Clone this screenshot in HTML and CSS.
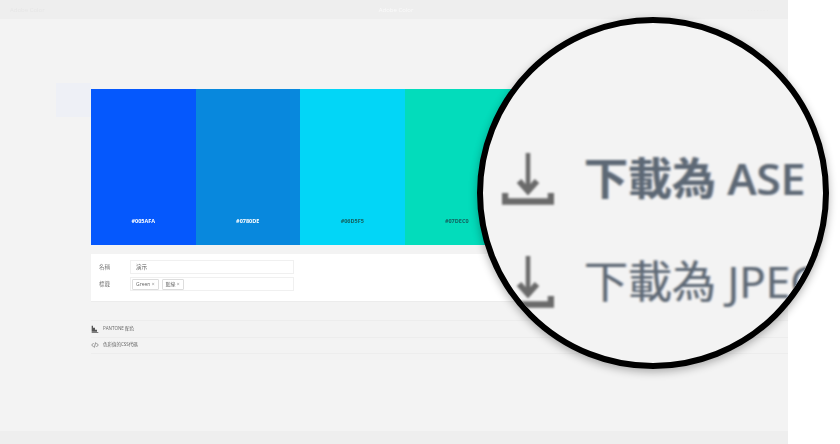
FILE: index.html
```html
<!DOCTYPE html>
<html lang="zh-Hant">
<head>
<meta charset="utf-8">
<title>演示</title>
<link rel="stylesheet" href="styles.css">
</head>
<body>
<div class="app">
  <header class="topbar"><span class="brand">Adobe Color</span><span class="title">Adobe Color</span><span class="tools">· · · · · · ·</span></header>
  <main class="content">
    <div class="stage">
      <div class="ghost"></div>
      <div class="column">
        <div class="swatches">
          <div class="swatch s1"><span>#005AFA</span></div>
          <div class="swatch s2"><span>#0780DE</span></div>
          <div class="swatch s3 dark"><span>#06D5F5</span></div>
          <div class="swatch s4 dark"><span>#07DEC0</span></div>
          <div class="swatch s5"></div>
        </div>
        <section class="form">
          <div class="row"><label>名稱</label><div class="field"><span class="value">演示</span></div></div>
          <div class="row"><label>標籤</label><div class="field"><span class="tag">Green <i>×</i></span><span class="tag">藍綠 <i>×</i></span></div></div>
        </section>
        <div class="links">
          <div class="link">
            <svg class="ico" viewBox="0 0 12 12"><path d="M1 1h2v9H1zM3 4h3v6H3zM3 7h6v3H3zM1 10.500h10v1H1z" fill="#555"/></svg>
            <span>PANTONE 配色</span>
          </div>
          <div class="link">
            <svg class="ico" viewBox="0 0 12 12"><path d="M4 3 1 6l3 3M8 3l3 3-3 3M7 2 5 10" fill="none" stroke="#666"/></svg>
            <span>色彩值的CSS代碼</span>
          </div>
        </div>
      </div>
    </div>
  </main>
  <footer class="bottombar"></footer>
</div>
<div class="lens">
  <div class="lens-inner">
    <div class="lens-row">
      <svg class="dl" viewBox="0 0 52 52"><path d="M26 0v36" fill="none" stroke="#6a6a6a" stroke-width="4.500"/><path d="M17 28l9 10 9-10" fill="none" stroke="#6a6a6a" stroke-width="6"/><path d="M3 40v8.500h46v-8.500" fill="none" stroke="#6a6a6a" stroke-width="6.500"/></svg>
      <span>下載為 ASE</span>
    </div>
    <div class="lens-row light">
      <svg class="dl" viewBox="0 0 52 52"><path d="M26 0v36" fill="none" stroke="#6a6a6a" stroke-width="4.500"/><path d="M17 28l9 10 9-10" fill="none" stroke="#6a6a6a" stroke-width="6"/><path d="M3 40v8.500h46v-8.500" fill="none" stroke="#6a6a6a" stroke-width="6.500"/></svg>
      <span>下載為 JPEG</span>
    </div>
  </div>
</div>
</body>
</html>
```
FILE: styles.css
```css
html, body { margin: 0; height: 100%; background: #fff; overflow: hidden; }
body { width: 840px; height: 444px; font-family: "Open Sans", "Noto Sans CJK TC", sans-serif; }
.app { width: 788px; height: 444px; background: #f3f3f3; display: flex; flex-direction: column; }
.topbar { height: 19px; background: #eeeeee; display: flex; align-items: center; justify-content: space-between; padding: 0 20px 0 10px; font-size: 6px; color: #e6e6e6; box-sizing: border-box; filter: blur(.6px); }
.title { color: #fafafa; }
.content { flex: 1; min-height: 0; }
.stage { position: relative; padding: 70px 0 0 91px; filter: blur(.45px); }
.ghost { position: absolute; left: 56px; top: 64px; width: 35px; height: 34px; background: #eef0f6; }
.column { width: 697px; }
.swatches { display: flex; height: 156px; }
.swatch { flex: 0 0 104.500px; display: flex; align-items: flex-end; justify-content: center; padding-bottom: 20px; box-sizing: border-box; color: #fff; font-size: 5.500px; font-weight: 700; }
.dark { color: #14605f; }
.s1 { background: #0558fd; }
.s2 { background: #0888dd; }
.s3 { background: #02d6f7; }
.s4 { background: #03dcbb; }
.s5 { background: #03dcbb; flex: 1; }
.form { margin-top: 9px; background: #fff; height: 48px; padding: 6px 0 0 8px; box-sizing: border-box; display: flex; flex-direction: column; gap: 3px; border-bottom: 1px solid #ececec; }
.row { display: flex; align-items: center; height: 14px; font-size: 5.500px; color: #555; }
.row label { width: 31px; color: #777; }
.field { width: 164px; height: 14px; box-sizing: border-box; border: 1px solid #f0f0f0; display: flex; align-items: center; gap: 3px; padding: 0 1px; }
.value { padding-left: 4px; }
.tag { border: 1px solid #ddd; border-radius: 1px; padding: 0 3px; font-size: 5px; height: 9px; line-height: 9px; color: #666; white-space: nowrap; }
.tag i { font-style: normal; color: #888; }
.links { margin-top: 18px; border-top: 1px solid #ededed; }
.link { height: 15.500px; line-height: 14px; border-bottom: 1px solid #ededed; display: flex; align-items: center; gap: 4px; font-size: 4.500px; color: #666; }
.link span { margin-top: -2px; }
.ico { width: 8px; height: 8px; }
.bottombar { height: 13px; background: #eeeeee; }
.lens { position: absolute; left: 477px; top: 17px; width: 352px; height: 352px; box-sizing: border-box; border: 6px solid #000; border-radius: 50%; background: #f3f3f3; overflow: hidden; box-shadow: 0 3px 8px rgba(0,0,0,.3); }
.lens-inner { padding: 130px 0 0 19px; display: flex; flex-direction: column; gap: 51px; filter: blur(.8px); }
.lens-row { display: flex; align-items: flex-start; gap: 30px; height: 52px; font-size: 44px; line-height: 50px; font-weight: 600; color: #5d6875; white-space: nowrap; text-shadow: -1px 0 rgba(200,120,40,.35), 1px 0 rgba(40,120,220,.35); }
.lens-row.light { font-weight: 400; }
.dl { width: 52px; height: 52px; flex: none; }
```
